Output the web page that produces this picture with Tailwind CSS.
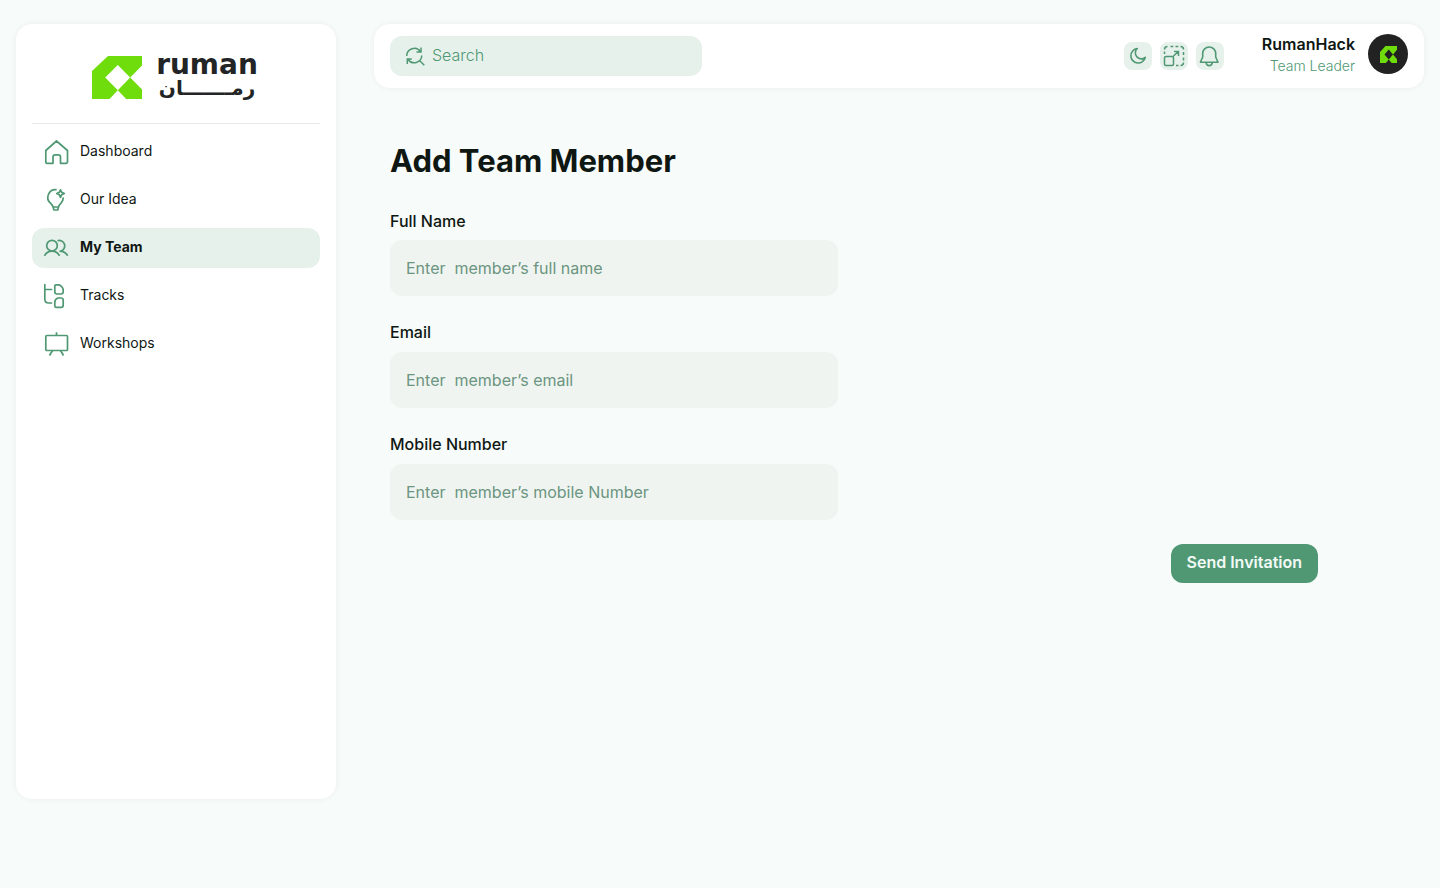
<!DOCTYPE html>
<html lang="en">
<head>
<meta charset="utf-8">
<meta name="viewport" content="width=device-width, initial-scale=1">
<title>Add Team Member</title>
<script src="https://cdn.jsdelivr.net/npm/@tailwindcss/browser@4"></script>
</head>
<body class="min-h-screen bg-[#f7fbfa] font-['Inter',sans-serif] text-[#0f1713]">
<svg class="hidden">
  <symbol id="mark" viewBox="0 0 50 43" preserveAspectRatio="none"><path fill-rule="evenodd" d="M16 0H50V9.500L38.200 21.500L50 33.500V43H34.200L25.800 34.200L17.500 43H0V15ZM25.800 9L13.200 21.500L25.800 34.200L38.200 21.500Z"/></symbol>
</svg>
<div class="flex items-start gap-[38px] px-4 pt-6">
  <aside class="h-[calc(100vh-113px)] w-80 shrink-0 rounded-2xl bg-white px-4 pt-8 shadow-[0_0_6px_rgba(15,60,40,0.06)]">
    <div class="flex h-[68px] items-start justify-center gap-3 border-b border-[#e6ebe9]">
      <svg class="h-[43px] w-[50px] fill-[#6fdc0b]"><use href="#mark"/></svg>
      <div class="flex w-[106px] flex-col items-center text-[#222425] font-['DejaVu_Sans',sans-serif] font-bold">
        <span class="text-[28px] leading-[18px]">ruman</span>
        <span lang="ar" dir="rtl" class="mt-1 text-xl leading-5">رمـــــــان</span>
      </div>
    </div>
    <nav class="mt-2 flex flex-col gap-2 text-sm">
      <a href="#" class="flex h-10 items-center gap-3 rounded-xl px-3">
        <svg class="size-6 shrink-0 overflow-visible" viewBox="0 0 24 24" fill="none" stroke="#4f9873" stroke-width="1.700" stroke-linejoin="round"><path d="M1.800 10.500 12.500 1 23.500 10.500V22q0 1.300-1.300 1.300H16.500V17q0-2.200-2.200-2.200H11.200Q9 14.800 9 17v6.300H3.100Q1.800 23.300 1.800 22Z"/></svg>
        <span class="pb-0.5">Dashboard</span>
      </a>
      <a href="#" class="flex h-10 items-center gap-3 rounded-xl px-3">
        <svg class="size-6 shrink-0 overflow-visible" viewBox="0 0 24 24" fill="none" stroke="#4f9873" stroke-width="1.700" stroke-linejoin="round" stroke-linecap="round"><path d="M12 1.700A7.700 7.700 0 0 0 6.500 15.200Q8.600 17.200 9 19H14.500Q15 17.200 17 15.200 19.200 12.800 19.200 10M9 19l1 3h3.700l.8-3M16.500 1.800l1.200 2.500 2.600 1.200-2.600 1.200-1.200 2.600-1.200-2.600L12.800 5.500l2.500-1.200Z"/></svg>
        <span class="pb-0.5">Our Idea</span>
      </a>
      <a href="#" aria-current="page" class="flex h-10 items-center gap-3 rounded-xl bg-[#e7f1eb] px-3 font-bold">
        <svg class="size-6 shrink-0 overflow-visible" viewBox="0 0 24 24" fill="none" stroke="#4f9873" stroke-width="1.700"><circle cx="8" cy="9.700" r="5.300"/><path d="M.5 19.800Q3 15.200 8 15.200T15.500 19.800M13.500 4.700A5.300 5.300 0 1 1 17 15M15.500 15.200Q21 15.200 23.700 19.800"/></svg>
        <span class="pb-0.5">My Team</span>
      </a>
      <a href="#" class="flex h-10 items-center gap-3 rounded-xl px-3">
        <svg class="size-6 shrink-0 overflow-visible" viewBox="0 0 24 24" fill="none" stroke="#4f9873" stroke-width="1.700" stroke-linecap="round"><path d="M.8.5V15q0 4 4 4H7.500M.8 5.500H7.500M12 .8H15Q19.200 3 19.200 6v1.800q0 2.200-2.200 2.200H13Q10.800 10 10.800 7.800V2Q10.800.8 12 .8ZM14 14H17Q19.200 14 19.200 16.200v5q0 2.200-2.200 2.200H12.300Q10.800 23.400 10.800 21.900V18.200q0-3 3.200-4.200Z"/></svg>
        <span class="pb-0.5">Tracks</span>
      </a>
      <a href="#" class="flex h-10 items-center gap-3 rounded-xl px-3">
        <svg class="size-6 shrink-0 overflow-visible" viewBox="0 0 24 24" fill="none" stroke="#4f9873" stroke-width="1.700"><rect x="1.800" y="3.500" width="21.700" height="15" rx="1"/><path d="M12.500 3.500V.3M8.500 18.500l-3 5M16.500 18.500l3 5"/></svg>
        <span class="pb-0.5">Workshops</span>
      </a>
    </nav>
  </aside>

  <div class="min-w-0 flex-1">
    <header class="flex h-16 items-center rounded-2xl bg-white px-4 shadow-[0_0_6px_rgba(15,60,40,0.06)]">
      <label class="flex h-10 w-[312px] items-center gap-2 rounded-xl bg-[#e7f1eb] px-4">
        <svg class="size-[18px] shrink-0 overflow-visible" viewBox="0 0 18 18" fill="none" stroke="#4f9873" stroke-width="1.500"><path d="M.7 9A7.600 7.600 0 0 1 14.500 4.600M15 .5V5H10.500M15.800 8.500A7.600 7.600 0 0 1 2 12.500M1.300 17V12H5.800M13.500 13.500l4.800 4.800"/></svg>
        <input type="search" aria-label="Search" placeholder="Search" class="min-w-0 flex-1 bg-transparent pb-0.5 text-base font-light outline-none placeholder:text-[#4f9873]">
      </label>
      <div class="ml-auto flex gap-2">
        <button type="button" aria-label="Dark mode" class="flex size-7 items-center justify-center rounded-lg bg-[#e7f1eb]">
          <svg class="size-5" viewBox="0 0 20 20" fill="none" stroke="#4f9873" stroke-width="1.600" stroke-linejoin="round"><path d="M9.300 2.500A7.300 7.300 0 1 0 17.300 11.300 5.500 5.500 0 0 1 9.300 2.500Z"/></svg>
        </button>
        <button type="button" aria-label="Full screen" class="flex size-7 items-center justify-center rounded-lg bg-[#e7f1eb]">
          <svg class="size-[22px]" viewBox="0 0 22 22" fill="none" stroke="#4f9873" stroke-width="1.500"><rect x="1.500" y="11.500" width="9" height="9" rx="1.500"/><path d="M1.500 9V6.500M1.500 4.500q0-3 3-3M7.500 1.500h2.800M12.500 1.500h2.800M17.500 1.500q3 0 3 3M20.500 7v3M20.500 12.500v3M20.500 17.500q0 3-3 3M15.500 20.500H13M10 11.500l5.300-5M11 6.500h4.500v4.500"/></svg>
        </button>
        <button type="button" aria-label="Notifications" class="flex size-7 items-center justify-center rounded-lg bg-[#e7f1eb]">
          <svg class="size-5 overflow-visible" viewBox="0 0 20 20" fill="none" stroke="#4f9873" stroke-width="1.600" stroke-linejoin="round"><path d="M2.700 7.500a6.500 6.500 0 0 1 13 0V11l2.300 5.300H.4L2.700 11ZM6 16.300q.5 3.300 3.200 3.300t3.200-3.300"/></svg>
        </button>
      </div>
      <div class="ml-[38px] flex items-center gap-[13px] pb-1">
        <div class="pt-0.5 text-right">
          <p class="text-base leading-[22px] font-semibold">RumanHack</p>
          <p class="text-sm leading-[22px] font-light text-[#4f9873]">Team Leader</p>
        </div>
        <div class="flex size-10 items-center justify-center rounded-full bg-[#222222]">
          <svg class="size-[17px] fill-[#6fdc0b]"><use href="#mark"/></svg>
        </div>
      </div>
    </header>

    <main class="px-4 pt-[53px]">
      <h1 class="text-[31px] leading-10 font-bold">Add Team Member</h1>
      <form class="mt-7 flex flex-col">
        <div class="flex max-w-md flex-col gap-6">
          <div>
            <label for="name" class="mb-[7px] block text-base leading-6 font-medium">Full Name</label>
            <input id="name" type="text" placeholder="Enter&nbsp; member’s full name" class="block h-14 w-full rounded-xl bg-[#f0f4f1] px-4 text-base outline-none placeholder:text-[#6b9580]">
          </div>
          <div>
            <label for="email" class="mb-2 block text-base leading-6 font-medium">Email</label>
            <input id="email" type="email" placeholder="Enter&nbsp; member’s email" class="block h-14 w-full rounded-xl bg-[#f0f4f1] px-4 text-base outline-none placeholder:text-[#6b9580]">
          </div>
          <div>
            <label for="mobile" class="mb-2 block text-base leading-6 font-medium">Mobile Number</label>
            <input id="mobile" type="tel" placeholder="Enter&nbsp; member’s mobile Number" class="block h-14 w-full rounded-xl bg-[#f0f4f1] px-4 text-base outline-none placeholder:text-[#6b9580]">
          </div>
        </div>
        <button type="submit" class="mt-6 mr-[90px] self-end rounded-xl bg-[#4f9873] px-4 pt-[6px] pb-[9px] text-base font-semibold text-[#f3faf6]">Send Invitation</button>
      </form>
    </main>
  </div>
</div>
</body>
</html>
